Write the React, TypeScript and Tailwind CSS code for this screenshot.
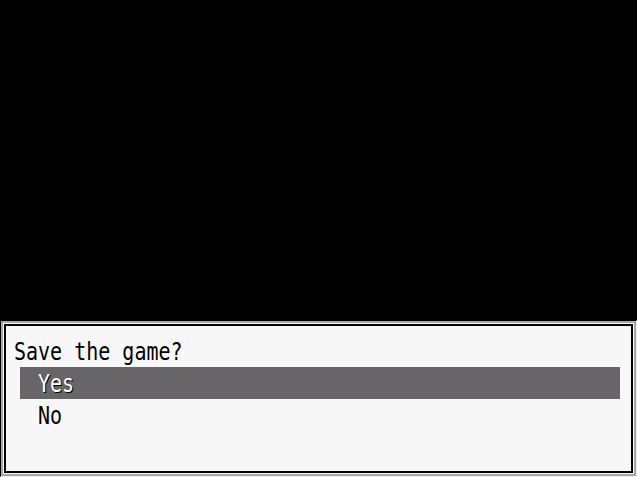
export default function App() {
  const font = "font-['DejaVu_Sans_Mono','Liberation_Mono',monospace] text-[20px] leading-[32px]";
  return (
    <div className="w-[637px] h-[477px] bg-black flex flex-col justify-end overflow-hidden">
      <div className="h-[157px] w-full border-t border-l border-black border-r border-b border-r-[#e8e8e8] border-b-[#e8e8e8] flex">
        <div className="flex-1 border-2 border-[#a8a8a8] flex">
          <div className="flex-1 border border-[#f7f7f7] flex">
            <div className="flex-1 border-2 border-black bg-[#f7f7f7] pt-[9px] flex flex-col">
              <div className={`${font} h-[32px] pl-[8px] text-black`}>
                <span className="inline-block scale-y-125">Save the game?</span>
              </div>
              <div className={`${font} h-[32px] ml-[14px] w-[600px] bg-[#676567] pl-[18px] text-white`}>
                <span className="inline-block scale-y-125 [text-shadow:1px_1px_0_#000]">Yes</span>
              </div>
              <div className={`${font} h-[32px] ml-[14px] pl-[18px] text-black`}>
                <span className="inline-block scale-y-125">No</span>
              </div>
            </div>
          </div>
        </div>
      </div>
    </div>
  );
}
